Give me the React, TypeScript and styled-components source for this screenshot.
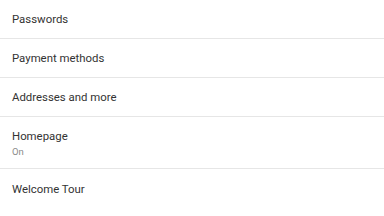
import React from 'react';
import styled, { createGlobalStyle } from 'styled-components';

const GlobalStyle = createGlobalStyle`
  html, body {
    margin: 0;
    padding: 0;
    background: #ffffff;
  }
  body {
    font-family: Roboto, 'Liberation Sans', sans-serif;
  }
`;

type Item = { title: string; subtitle?: string };

const items: Item[] = [
  { title: 'Passwords' },
  { title: 'Payment methods' },
  { title: 'Addresses and more' },
  { title: 'Homepage', subtitle: 'On' },
  { title: 'Welcome Tour' },
];

const App: React.FC = () => {
  return (
    <>
      <GlobalStyle />
      <List>
        {items.map((item) => (
          <Row key={item.title} tall={!!item.subtitle}>
            <Title>{item.title}</Title>
            {item.subtitle && <Subtitle>{item.subtitle}</Subtitle>}
          </Row>
        ))}
      </List>
    </>
  );
};

export default App;

const List = styled.div`
  display: flex;
  flex-direction: column;
  width: 384px;
  height: 216px;
  overflow: hidden;
  background: #ffffff;
`;

const Row = styled.div<{ tall: boolean }>`
  box-sizing: border-box;
  display: flex;
  flex-direction: column;
  justify-content: center;
  flex-shrink: 0;
  height: ${({ tall }) => (tall ? '52px' : '39px')};
  padding: ${({ tall }) => (tall ? '2px 12px 0' : '1px 12px 0')};
  border-bottom: 1px solid #e6e6e6;

  &:last-child {
    border-bottom: none;
  }
`;

const Title = styled.div`
  color: #333333;
  font-size: 11.4px;
  line-height: 15px;
`;

const Subtitle = styled.div`
  color: #8a8a8a;
  font-size: 9.5px;
  line-height: 12px;
  margin-top: 2px;
`;
